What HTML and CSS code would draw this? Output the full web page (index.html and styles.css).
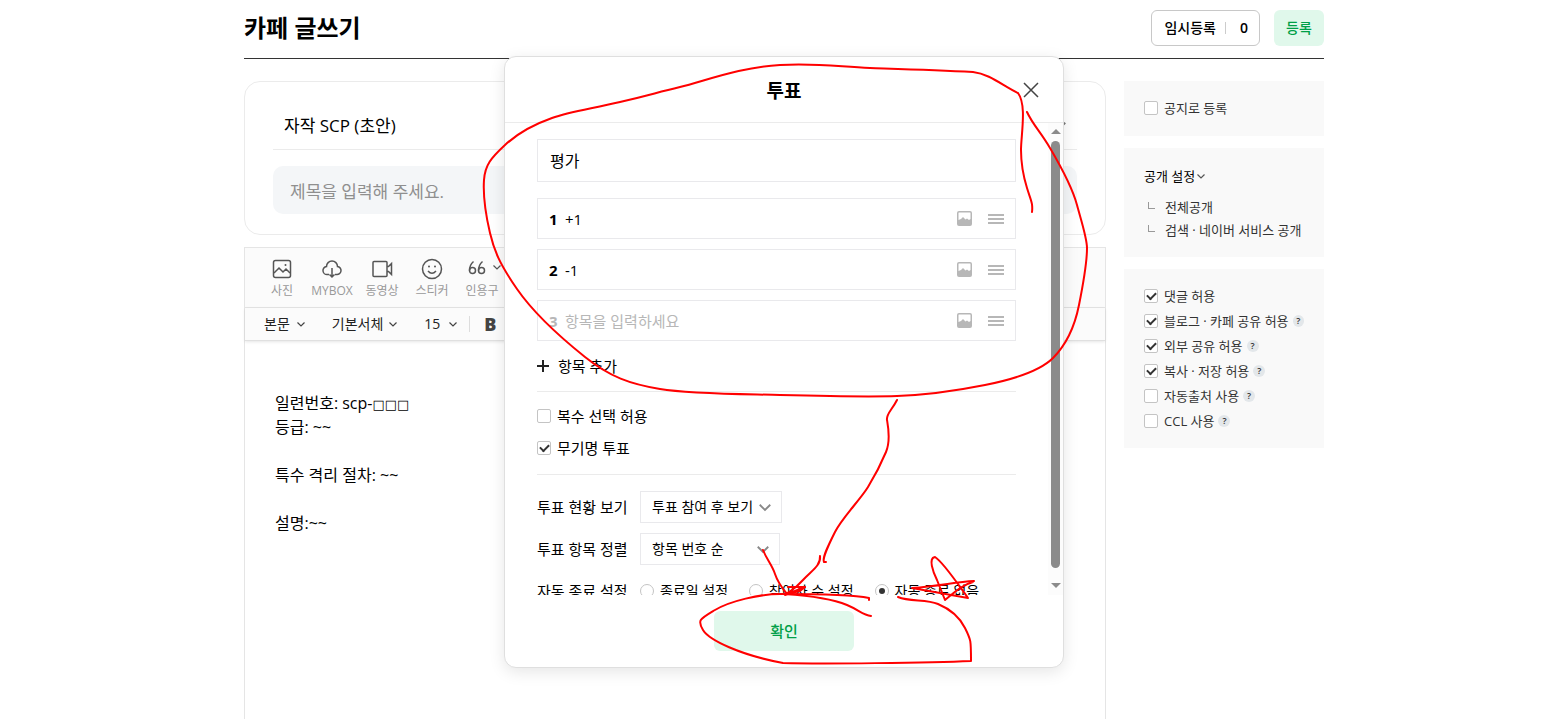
FILE: index.html
```html
<!DOCTYPE html>
<html lang="ko">
<head>
    <meta charset="UTF-8">
    <meta name="viewport" content="width=device-width, initial-scale=1.0">
    <title>카페 글쓰기</title>
    <link rel="stylesheet" href="styles.css">
</head>
<body>

    <!-- shared icons -->
    <svg class="sprite" aria-hidden="true">
        <symbol id="chevron" viewBox="0 0 12 12"><path d="M2.500 4.500L6 8l3.500-3.500" fill="none" stroke="currentColor" stroke-width="1.200"/></symbol>
        <symbol id="picture" viewBox="0 0 15 15"><path fill-rule="evenodd" d="M2 0h11a2 2 0 0 1 2 2v11a2 2 0 0 1-2 2H2a2 2 0 0 1-2-2V2a2 2 0 0 1 2-2zM1.500 2v7l2.500-1 2-2 2.500 2.500 1.500-1 2 1.500 1.500-1V2q0-.5-.5-.5H2q-.5 0-.5.500z" fill="currentColor"/></symbol>
        <symbol id="bars" viewBox="0 0 16 10"><path d="M0 1h16M0 5h16M0 9h16" stroke="currentColor" stroke-width="2"/></symbol>
    </svg>

    <div class="page">

        <header class="header">
            <h1>카페 글쓰기</h1>
            <div class="header-buttons">
                <button class="btn-draft" type="button"><span>임시등록</span><span class="draft-count">0</span></button>
                <button class="btn-submit" type="button">등록</button>
            </div>
        </header>

        <div class="content">
            <main class="editor">
                <div class="title-card">
                    <div class="board-select">
                        <select aria-label="게시판">
                            <option>자작 SCP (초안)</option>
                        </select>
                        <svg class="chevron-big"><use href="#chevron"/></svg>
                    </div>
                    <input class="title-input" type="text" aria-label="제목" placeholder="제목을 입력해 주세요.">
                </div>

                <div class="editor-box">
                    <div class="toolbar">
                        <button type="button" class="tool">
                            <svg viewBox="0 0 22 22"><rect x="2.500" y="2.500" width="17" height="17" rx="2"/><path d="M3 15l5-5 4 4 3-3 4 4"/><circle cx="14.500" cy="7" r="1" class="dot"/></svg>
                            사진
                        </button>
                        <button type="button" class="tool">
                            <svg viewBox="0 0 22 22"><path d="M8 16.500H6.500a4 4 0 0 1-1-8 5.500 5.500 0 0 1 11 0 4 4 0 0 1-1 8H14M11 10v9M8.500 16.500L11 19l2.500-2.500"/></svg>
                            MYBOX
                        </button>
                        <button type="button" class="tool">
                            <svg viewBox="0 0 22 22"><path d="M3 3.500h12q1 0 1 1v13q0 1-1 1H3q-1 0-1-1v-13q0-1 1-1zM16 8.500h1.500l3-3v11l-3-3H16"/></svg>
                            동영상
                        </button>
                        <button type="button" class="tool">
                            <svg viewBox="0 0 22 22"><circle cx="11" cy="11" r="9.500"/><path d="M7 13q4 4.500 8 0"/><circle cx="8" cy="8.500" r="1" class="dot"/><circle cx="14" cy="8.500" r="1" class="dot"/></svg>
                            스티커
                        </button>
                        <button type="button" class="tool tool-quote">
                            <svg viewBox="0 0 22 22"><circle cx="6.500" cy="12.500" r="3"/><circle cx="15.500" cy="12.500" r="3"/><path d="M3.500 12.500Q3.500 7 7.500 3.500M12.500 12.500Q12.500 7 16.500 3.500"/></svg>
                            인용구
                            <svg class="tool-more"><use href="#chevron"/></svg>
                        </button>
                    </div>
                    <div class="format-bar">
                        <button type="button">본문<svg><use href="#chevron"/></svg></button>
                        <button type="button" class="font-family">기본서체<svg><use href="#chevron"/></svg></button>
                        <button type="button" class="font-size">15<svg><use href="#chevron"/></svg></button>
                        <button type="button" class="bold" aria-label="굵게">B</button>
                    </div>
                    <div class="article" contenteditable="true" spellcheck="false">
                        <p>일련번호: scp-<span class="boxes">□□□</span></p>
                        <p>등급: ~~</p>
                        <p><br></p>
                        <p>특수 격리 절차: ~~</p>
                        <p><br></p>
                        <p>설명:~~</p>
                    </div>
                </div>
            </main>

            <aside class="side">
                <div class="side-card notice">
                    <label class="check"><input type="checkbox"> 공지로 등록</label>
                </div>
                <div class="side-card open-card">
                    <button type="button" class="open-toggle">공개 설정<svg><use href="#chevron"/></svg></button>
                    <ul>
                        <li>전체공개</li>
                        <li>검색 · 네이버 서비스 공개</li>
                    </ul>
                </div>
                <div class="side-card options-card">
                    <div class="side-row"><label class="check"><input type="checkbox" checked> 댓글 허용</label></div>
                    <div class="side-row"><label class="check"><input type="checkbox" checked> 블로그 · 카페 공유 허용</label><button type="button" class="help">?</button></div>
                    <div class="side-row"><label class="check"><input type="checkbox" checked> 외부 공유 허용</label><button type="button" class="help">?</button></div>
                    <div class="side-row"><label class="check"><input type="checkbox" checked> 복사 · 저장 허용</label><button type="button" class="help">?</button></div>
                    <div class="side-row"><label class="check"><input type="checkbox"> 자동출처 사용</label><button type="button" class="help">?</button></div>
                    <div class="side-row"><label class="check"><input type="checkbox"> CCL 사용</label><button type="button" class="help">?</button></div>
                </div>
            </aside>
        </div>

        <!-- poll popup -->
        <div class="modal" role="dialog" aria-labelledby="poll-title">
            <div class="modal-header">
                <h2 id="poll-title">투표</h2>
                <button type="button" class="close" aria-label="닫기">
                    <svg viewBox="0 0 16 16"><path d="M1 1l14 14M15 1L1 15"/></svg>
                </button>
            </div>

            <div class="modal-body">
                <form class="poll">
                    <input class="poll-name" type="text" aria-label="투표 제목" value="평가">

                    <ol class="poll-items">
                        <li>
                            <label for="item1">1</label>
                            <input id="item1" type="text" value="+1">
                            <button type="button" aria-label="사진"><svg class="picture"><use href="#picture"/></svg></button>
                            <button type="button" aria-label="이동"><svg class="bars"><use href="#bars"/></svg></button>
                        </li>
                        <li>
                            <label for="item2">2</label>
                            <input id="item2" type="text" value="-1">
                            <button type="button" aria-label="사진"><svg class="picture"><use href="#picture"/></svg></button>
                            <button type="button" aria-label="이동"><svg class="bars"><use href="#bars"/></svg></button>
                        </li>
                        <li class="empty">
                            <label for="item3">3</label>
                            <input id="item3" type="text" placeholder="항목을 입력하세요">
                            <button type="button" aria-label="사진"><svg class="picture"><use href="#picture"/></svg></button>
                            <button type="button" aria-label="이동"><svg class="bars"><use href="#bars"/></svg></button>
                        </li>
                    </ol>

                    <button type="button" class="add-item">
                        <svg viewBox="0 0 12 12"><path d="M6 0v12M0 6h12"/></svg>항목 추가
                    </button>

                    <div class="poll-checks">
                        <label class="check"><input type="checkbox"> 복수 선택 허용</label>
                        <label class="check"><input type="checkbox" checked> 무기명 투표</label>
                    </div>

                    <div class="poll-settings">
                        <label for="view">투표 현황 보기</label>
                        <div class="select select-wide">
                            <select id="view"><option>투표 참여 후 보기</option></select>
                            <svg><use href="#chevron"/></svg>
                        </div>
                        <label for="order">투표 항목 정렬</label>
                        <div class="select">
                            <select id="order"><option>항목 번호 순</option></select>
                            <svg><use href="#chevron"/></svg>
                        </div>
                        <span>자동 종료 설정</span>
                        <div class="radios">
                            <label><input type="radio" name="end"> 종료일 설정</label>
                            <label><input type="radio" name="end"> 참여자 수 설정</label>
                            <label><input type="radio" name="end" checked> 자동 종료 없음</label>
                        </div>
                    </div>
                </form>

                <div class="scrollbar">
                    <span class="arrow-up"></span>
                    <span class="thumb"></span>
                    <span class="arrow-down"></span>
                </div>
            </div>

            <div class="modal-footer">
                <button type="button" class="btn-ok">확인</button>
            </div>

            <!-- hand-drawn marks -->
            <svg class="marks" viewBox="480 50 620 630" aria-hidden="true">
                <path d="M1027 112C1033 125 1040 131 1050 148S1073 190 1077 205 1087 238 1087 248 1083 285 1079 305 1066 345 1053 358 1015 379 985 385 925 395 897 396 820 396 780 395 690 394 660 389 610 377 585 357 535 315 517 289 494 250 490 233 483 195 484 180 491 158 505 145 535 124 552 118 590 109 620 102 655 93 680 87 740 67 780 65 840 67 870 68 935 70 973 72C990 74 1003 86 1018 93 1027 105 1021 135 1021 150S1023 175 1027 188 1033 203 1032 212"/>
                <path d="M897 400C892 410 886 414 887 420S891 440 886 452 876 474 868 487 842 518 835 532 822 558 824 562h2"/>
                <path d="M820 556C821 566 811 571 803 580S792 590 785 595L805 587H788"/>
                <path d="M763 550C767 560 772 565 775 574S782 588 787 594L800 591 805 587"/>
                <path d="M869 600V598C850 594 800 594 780 594S730 601 715 610 697 620 703 630 740 655 783 663C820 664 930 663 971 661 971 640 971 640 965 628S950 609 938 604 910 602 898 597"/>
                <path d="M785 594C815 596 835 600 847 605S863 615 871 616"/>
                <path d="M974 581C955 582 940 586 912 588L968 598C955 580 943 562 935 557 928 558 933 572 937 580L945 600C955 592 962 585 973 582"/>
            </svg>
        </div>

    </div>

</body>
</html>
```
FILE: styles.css
```css
* {
    box-sizing: border-box;
}

body {
    margin: 0;
    padding-left: 2px;
    font-family: "Open Sans", "Noto Sans CJK KR", sans-serif;
    font-size: 15px;
    line-height: 24px;
    color: #000;
    background-color: #fff;
}

h1, h2, p, ul, ol {
    margin: 0;
    padding: 0;
}

ul, ol {
    list-style: none;
}

button, input, select {
    margin: 0;
    padding: 0;
    border: none;
    background: none;
    color: inherit;
    font: inherit;
}

button, select {
    cursor: pointer;
}

input, select {
    appearance: none;
    outline: none;
    border-radius: 0;
}

svg {
    flex: none;
    width: 12px;
    height: 12px;
}

.sprite {
    display: none;
}

.page {
    position: relative;
    display: flex;
    flex-direction: column;
    max-width: 1080px;
    height: 100vh;
    min-height: 700px;
    margin: 0 auto;
}

/* header */
.header {
    display: flex;
    align-items: center;
    justify-content: space-between;
    height: 59px;
    padding-bottom: 2px;
    border-bottom: 1px solid #333;
}

.header h1 {
    font-size: 24px;
    font-weight: 700;
    line-height: 32px;
}

.header-buttons {
    display: flex;
    gap: 14px;
}

.btn-draft,
.btn-submit {
    height: 36px;
    border-radius: 6px;
    font-size: 14px;
    font-weight: 500;
}

.btn-draft {
    display: flex;
    align-items: center;
    padding: 0 11px 0 12px;
    border: 1px solid #c8c8c8;
}

.draft-count {
    margin-left: 9px;
    padding-left: 14px;
    border-left: 1px solid #ccc;
    font-weight: 600;
    line-height: 12px;
}

.btn-submit {
    width: 50px;
    background-color: #e0f8eb;
    color: #009f47;
}

/* layout */
.content {
    display: flex;
    flex: 1;
    gap: 18px;
    min-height: 0;
    padding-top: 22px;
}

.editor {
    display: flex;
    flex: 1;
    flex-direction: column;
    gap: 12px;
}

.title-card {
    padding: 20px 28px;
    border: 1px solid #ebebeb;
    border-radius: 16px;
    font-size: 17px;
}

.board-select {
    position: relative;
    border-bottom: 1px solid #ebebeb;
}

.board-select select {
    width: 100%;
    height: 47px;
    padding: 0 11px;
}

.chevron-big {
    position: absolute;
    top: 14px;
    right: 8px;
    width: 18px;
    height: 18px;
    color: #777;
}

.title-input {
    width: 100%;
    height: 48px;
    margin-top: 16px;
    padding: 2px 17px 0;
    border-radius: 10px;
    background-color: #f4f6f8;
}

.title-input::placeholder {
    color: #8f8f8f;
}

/* editor */
.editor-box {
    flex: 1;
    border: 1px solid #e5e5e5;
    border-bottom: none;
}

.toolbar {
    display: flex;
    height: 60px;
    padding: 10px 12px 0;
    border-bottom: 1px solid #e5e5e5;
    background-color: #fbfbfb;
}

.tool {
    position: relative;
    display: flex;
    flex-direction: column;
    align-items: center;
    gap: 2px;
    width: 50px;
    height: 44px;
    color: #999;
    font-size: 12px;
    line-height: 18px;
}

.tool svg {
    width: 22px;
    height: 22px;
    fill: none;
    stroke: #555;
    stroke-width: 1.500;
}

.tool .dot {
    fill: #555;
    stroke: none;
}

.tool-quote > svg:first-child {
    margin-right: 10px;
}

.tool .tool-more {
    position: absolute;
    top: 3px;
    right: 4px;
    width: 12px;
    height: 12px;
    color: #555;
    stroke-width: 1;
}

.format-bar {
    display: flex;
    align-items: center;
    height: 33px;
    padding-left: 19px;
    border-bottom: 1px solid #e0e0e0;
    box-shadow: 0 1px 3px rgba(0, 0, 0, 0.1);
    background-color: #fbfbfb;
    color: #222;
    font-size: 14px;
}

.format-bar button {
    display: flex;
    align-items: center;
    gap: 5px;
    margin-right: 25px;
}

.format-bar svg {
    color: #444;
}

.format-bar .font-family {
    gap: 4px;
}

.format-bar .font-size {
    gap: 7px;
    margin-right: 10px;
}

.format-bar .bold {
    padding-left: 14px;
    border-left: 1px solid #ddd;
    color: #444;
    font-size: 18px;
    font-weight: 800;
    line-height: 16px;
}

.article {
    padding: 50px 30px;
    font-size: 16px;
    outline: none;
}

.boxes {
    font-family: "DejaVu Sans", sans-serif;
    font-size: 13px;
    line-height: 16px;
}

/* check boxes and radios */
.check {
    display: flex;
    align-items: center;
    gap: 6px;
}

.check input {
    display: flex;
    align-items: center;
    justify-content: center;
    width: 14px;
    height: 14px;
    border: 1px solid #c4c4c4;
    border-radius: 2px;
    background-color: #fff;
}

.check input:checked::before {
    content: "";
    width: 7px;
    height: 4px;
    margin-bottom: 2px;
    border: solid #333;
    border-width: 0 0 2px 2px;
    transform: rotate(-45deg);
}

/* side */
.side {
    display: flex;
    flex-direction: column;
    gap: 12px;
    width: 200px;
    font-size: 13px;
    line-height: 20px;
    color: #333;
}

.side-card {
    padding: 14px 20px 15px;
    background-color: #f9f9f9;
}

.notice {
    padding: 17px 20px 18px;
}

.open-card {
    padding: 18px 20px 16px;
}

.open-toggle {
    display: flex;
    align-items: center;
    color: #000;
}

.open-toggle svg {
    color: #555;
}

.open-card ul {
    padding-top: 9px;
}

.open-card li {
    display: flex;
    align-items: center;
    height: 23px;
    white-space: nowrap;
}

.open-card li::before {
    content: "";
    width: 6px;
    height: 6px;
    margin: 0 10px 2px 4px;
    border-left: 1px solid #999;
    border-bottom: 1px solid #999;
}

.side-row {
    display: flex;
    align-items: center;
    gap: 4px;
    height: 25px;
    white-space: nowrap;
}

.help {
    width: 12px;
    height: 12px;
    border-radius: 50%;
    background-color: #e3e7ea;
    color: #333;
    font-size: 9px;
    font-weight: 600;
    line-height: 12px;
}

/* modal */
.modal {
    position: absolute;
    top: 56px;
    left: 50%;
    width: 560px;
    transform: translateX(-50%);
    border: 1px solid #dfdfdf;
    border-radius: 12px;
    background-color: #fff;
    box-shadow: 0 4px 16px rgba(0, 0, 0, 0.1);
}

.modal-header {
    position: relative;
    height: 66px;
    padding-top: 2px;
    border-bottom: 1px solid #ebebeb;
    text-align: center;
}

.modal-header h2 {
    font-size: 19px;
    font-weight: 700;
    line-height: 64px;
}

.close {
    position: absolute;
    top: 21px;
    right: 20px;
    display: flex;
    padding: 4px;
}

.close svg {
    width: 16px;
    height: 16px;
    stroke: #444;
    stroke-width: 1.500;
}

.modal-body {
    display: flex;
    justify-content: space-between;
    height: 472px;
    overflow: hidden;
}

.poll {
    flex: 1;
    padding: 16px 32px;
}

.poll-name {
    width: 100%;
    height: 43px;
    padding: 0 12px 2px;
    border: 1px solid #e9e9ec;
    font-size: 16px;
}

.poll-items {
    display: flex;
    flex-direction: column;
    gap: 10px;
    padding-top: 16px;
}

.poll-items li {
    display: flex;
    align-items: center;
    height: 41px;
    padding: 0 11px;
    border: 1px solid #e9e9ec;
}

.poll-items label {
    width: 16px;
    font-weight: 700;
}

.poll-items input {
    flex: 1;
}

.poll-items button {
    display: flex;
    margin-left: 16px;
    color: #b7b7b7;
}

.poll-items .empty,
.poll-items input::placeholder {
    color: #b7b7b7;
}

.picture {
    width: 15px;
    height: 15px;
}

.bars {
    width: 16px;
    height: 10px;
}

.add-item {
    display: flex;
    align-items: center;
    gap: 9px;
    height: 50px;
}

.add-item svg {
    stroke: #222;
    stroke-width: 2;
}

.poll-checks {
    padding: 8px 0 10px;
    border-top: 1px solid #ebebeb;
    border-bottom: 1px solid #ebebeb;
}

.poll-checks .check {
    height: 32px;
}

.poll-settings {
    display: grid;
    grid-template-columns: 103px 1fr;
    grid-auto-rows: 32px;
    row-gap: 10px;
    align-items: center;
    padding-top: 16px;
    white-space: nowrap;
}

.select {
    position: relative;
    width: 140px;
    font-size: 14px;
}

.select-wide {
    width: 142px;
}

.select select {
    width: 100%;
    height: 32px;
    padding: 0 11px;
    border: 1px solid #e9e9ec;
}

.select svg {
    position: absolute;
    top: 7px;
    right: 8px;
    width: 18px;
    height: 18px;
    color: #888;
    pointer-events: none;
}

.radios {
    display: flex;
    gap: 21px;
    font-size: 14px;
}

.radios label {
    display: flex;
    align-items: center;
    gap: 6px;
}

.radios input {
    display: flex;
    align-items: center;
    justify-content: center;
    width: 14px;
    height: 14px;
    border: 1px solid #c4c4c4;
    border-radius: 50%;
}

.radios input:checked::before {
    content: "";
    width: 6px;
    height: 6px;
    border-radius: 50%;
    background-color: #333;
}

.scrollbar {
    display: flex;
    flex-direction: column;
    align-items: center;
    width: 15px;
    padding: 6px 0;
    background-color: #fcfcfc;
}

.arrow-up,
.arrow-down {
    border: 5px solid transparent;
}

.arrow-up {
    border-top: none;
    border-bottom-color: #8b8b8b;
}

.arrow-down {
    margin-top: 15px;
    border-bottom: none;
    border-top-color: #8b8b8b;
}

.thumb {
    width: 9px;
    height: 427px;
    margin-top: 7px;
    border-radius: 5px;
    background-color: #8b8b8b;
}

.modal-footer {
    display: flex;
    justify-content: center;
    padding: 16px;
}

.btn-ok {
    width: 140px;
    height: 40px;
    border-radius: 6px;
    background-color: #e0f8eb;
    color: #009f47;
    font-weight: 500;
}

.marks {
    position: absolute;
    top: -7px;
    left: -25px;
    width: 620px;
    height: 630px;
    fill: none;
    stroke: #f00;
    stroke-width: 2;
    stroke-linejoin: round;
    stroke-linecap: round;
    pointer-events: none;
}
```
